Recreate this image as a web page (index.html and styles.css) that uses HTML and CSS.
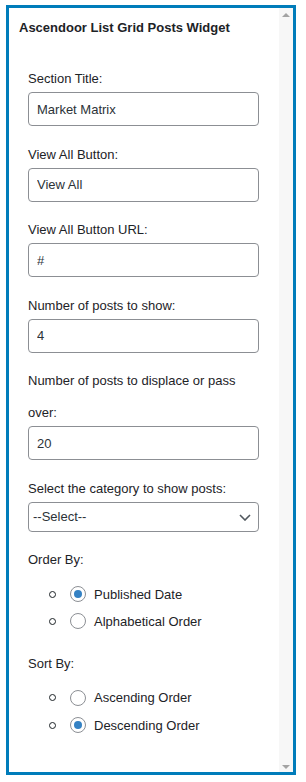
FILE: index.html
```html
<!DOCTYPE html>
<html lang="en">
<head>
<meta charset="UTF-8" />
<meta name="viewport" content="width=device-width, initial-scale=1" />
<title>Ascendoor List Grid Posts Widget</title>
<link rel="stylesheet" href="styles.css">
</head>
<body>

<div class="widget">
  <div class="widget-body">
    <h3 class="widget-title">Ascendoor List Grid Posts Widget</h3>

    <form class="widget-form">
      <div class="field">
        <label for="sectionTitle">Section Title:</label>
        <input type="text" class="text-input" id="sectionTitle" value="Market Matrix" />
      </div>

      <div class="field">
        <label for="buttonLabel">View All Button:</label>
        <input type="text" class="text-input" id="buttonLabel" value="View All" />
      </div>

      <div class="field">
        <label for="buttonUrl">View All Button URL:</label>
        <input type="text" class="text-input" id="buttonUrl" value="#" />
      </div>

      <div class="field">
        <label for="postCount">Number of posts to show:</label>
        <input type="number" class="text-input" id="postCount" value="4" />
      </div>

      <div class="field">
        <label for="postOffset">Number of posts to displace or pass over:</label>
        <input type="number" class="text-input" id="postOffset" value="20" />
      </div>

      <div class="field">
        <label for="category">Select the category to show posts:</label>
        <div class="select-wrap">
          <select id="category" class="select-input">
            <option selected>--Select--</option>
          </select>
          <svg class="chevron" width="12" height="7" viewBox="0 0 12 7">
            <polyline points="1,1 6,6 11,1" fill="none" stroke="#50575e" stroke-width="1.6" />
          </svg>
        </div>
      </div>

      <div class="field">
        <span class="group-label">Order By:</span>
        <ul class="radio-list">
          <li><label><input type="radio" name="orderBy" checked /> Published Date</label></li>
          <li><label><input type="radio" name="orderBy" /> Alphabetical Order</label></li>
        </ul>
      </div>

      <div class="field">
        <span class="group-label">Sort By:</span>
        <ul class="radio-list">
          <li><label><input type="radio" name="sortBy" /> Ascending Order</label></li>
          <li><label><input type="radio" name="sortBy" checked /> Descending Order</label></li>
        </ul>
      </div>
    </form>
  </div>

  <div class="scrollbar">
    <span class="arrow arrow-up"></span>
    <span class="arrow arrow-down"></span>
  </div>
</div>

</body>
</html>
```

FILE: styles.css
```css
* {
  box-sizing: border-box;
}
body {
  margin: 0;
  background: #fff;
  font-family: "Liberation Sans", Arial, sans-serif;
  font-size: 13px;
  color: #1d2327;
}
.widget {
  margin: 5px 10px 0 6px;
  height: 770px;
  border: 3px solid #007cba;
  display: flex;
}
.widget-body {
  flex: 1;
  overflow: hidden;
}
.widget-title {
  margin: 0;
  padding: 10px 10px 0;
  font-size: 13px;
  font-weight: 700;
  line-height: 20px;
}
.widget-form {
  padding: 25px 20px 0 19px;
}
.field {
  margin-bottom: 12.5px;
}
.field > label, .group-label {
  display: block;
  line-height: 32px;
}
.text-input {
  display: block;
  width: 100%;
  height: 34px;
  margin: -3px 0 0;
  padding: 0 8px;
  border: 1px solid #8c8f94;
  border-radius: 4px;
  background: #fff;
  font: inherit;
  color: #2c3338;
  -moz-appearance: textfield;
}
.text-input::-webkit-outer-spin-button, .text-input::-webkit-inner-spin-button {
  -webkit-appearance: none;
  margin: 0;
}
.select-wrap {
  position: relative;
  margin-top: -3px;
}
.select-input {
  display: block;
  width: 100%;
  height: 30px;
  padding: 0 24px 0 4px;
  border: 1px solid #8c8f94;
  border-radius: 4px;
  background: #fff;
  font: inherit;
  color: #2c3338;
  -webkit-appearance: none;
  appearance: none;
}
.chevron {
  position: absolute;
  right: 8px;
  top: 12px;
  pointer-events: none;
}
.radio-list {
  list-style: none;
  margin: 4.5px 0 0;
  padding: 0;
}
.radio-list li {
  display: flex;
  align-items: center;
  height: 27.3px;
}
.radio-list li::before {
  content: "";
  width: 5px; height: 5px;
  margin: 0 14px 0 20.5px;
  border: 1px solid #1d2327;
  border-radius: 50%;
}
.radio-list label {
  display: flex;
  align-items: center;
}
.radio-list input[type="radio"] {
  -webkit-appearance: none;
  appearance: none;
  width: 16px; height: 16px;
  margin: 0 8.5px 0 0;
  border: 1px solid #8c8f94;
  border-radius: 50%;
  background: #fff;
  display: grid;
  place-content: center;
}
.radio-list input[type="radio"]:checked::before {
  content: "";
  width: 8px; height: 8px;
  border-radius: 50%;
  background: #3582c4;
}
.scrollbar {
  width: 14px;
  background: #f7f7f7;
  display: flex; flex-direction: column;
  justify-content: space-between; align-items: center;
  padding: 5px 0 3px;
}
.arrow {
  width: 0; height: 0;
  border-left: 4px solid transparent;
  border-right: 4px solid transparent;
}
.arrow-up {
  border-bottom: 4px solid #a3a3a3;
}
.arrow-down {
  border-top: 4px solid #a3a3a3;
}
```
